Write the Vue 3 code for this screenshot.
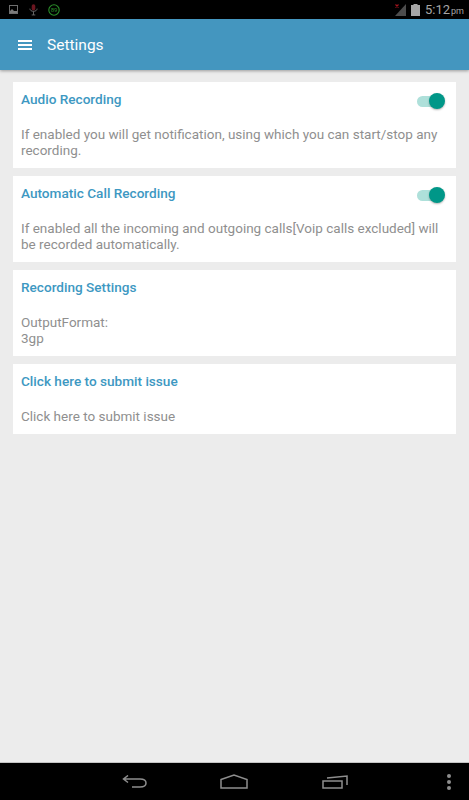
<script setup>
const cards = [
  { title: 'Audio Recording', toggle: true, lines: ['If enabled you will get notification, using which you can start/stop any', 'recording.'] },
  { title: 'Automatic Call Recording', toggle: true, lines: ['If enabled all the incoming and outgoing calls[Voip calls excluded] will', 'be recorded automatically.'] },
  { title: 'Recording Settings', toggle: false, lines: ['OutputFormat:', '3gp'] },
  { title: 'Click here to submit issue', toggle: false, lines: ['Click here to submit issue'] }
]
</script>

<template>
  <div class="screen">
    <div class="status-bar">
      <div class="status-left">
        <svg width="10" height="10" viewBox="0 0 10 10">
          <rect x="0.5" y="0.5" width="8" height="8" fill="none" stroke="#6e6e6e" />
          <path d="M1 8 L1 6 L3 4 L5 6 L8 6 L8 8 Z" fill="#7c7c7c" />
        </svg>
        <svg width="9" height="12" viewBox="0 0 10 13">
          <rect x="3" y="0" width="4" height="7" rx="2" fill="#6b1620" />
          <path d="M1 5 C1 9 9 9 9 5 M5 8 V12 M3 12 H7" fill="none" stroke="#6e6e6e" stroke-width="1" />
        </svg>
        <svg width="12" height="12" viewBox="0 0 12 12">
          <circle cx="6" cy="6" r="5.2" fill="none" stroke="#2a8f2a" stroke-width="1.1" />
          <text x="6" y="8" text-anchor="middle" class="battery-level">89</text>
        </svg>
      </div>
      <div class="status-right">
        <svg width="11" height="12" viewBox="0 0 11 12">
          <path d="M0 12 L11 0 V12 Z" fill="#4c4c4c" />
          <path d="M0.5 0.5 L3.5 3.5 M3.5 0.5 L0.5 3.5" stroke="#a8141e" stroke-width="1.1" />
        </svg>
        <svg class="battery" width="9" height="12" viewBox="0 0 9 12">
          <rect x="2.5" y="0" width="4" height="2" fill="#a6a6a6" />
          <rect x="0" y="1" width="9" height="11" fill="#a6a6a6" />
        </svg>
        <span class="clock">5:12</span>
        <span class="ampm">pm</span>
      </div>
    </div>

    <header class="toolbar">
      <div class="burger"><i></i><i></i><i></i></div>
      <span class="toolbar-title">Settings</span>
    </header>

    <main class="content">
      <section v-for="card in cards" :key="card.title" class="card">
        <div class="card-head">
          <h2>{{ card.title }}</h2>
          <div v-if="card.toggle" class="switch"><span class="thumb"></span></div>
        </div>
        <p><span v-for="line in card.lines" :key="line">{{ line }}</span></p>
      </section>
    </main>

    <nav class="nav-bar">
      <svg class="nav-back" width="25" height="13" viewBox="0 0 25 13">
        <path d="M1.5 4 H18 C26 4 26 12 18 12 H10 M6 0.5 L1.5 4 L6 7.5" fill="none" stroke="#8e8e8e" stroke-width="1.5" />
      </svg>
      <svg class="nav-home" width="28" height="15" viewBox="0 0 28 15">
        <path d="M1 5.5 L14 1 L27 5.5 V14 H1 Z" fill="none" stroke="#8e8e8e" stroke-width="1.5" />
      </svg>
      <svg class="nav-recent" width="26" height="14" viewBox="0 0 26 14">
        <rect x="1" y="6" width="19" height="7" fill="none" stroke="#8e8e8e" stroke-width="1.5" />
        <path d="M5 3 L25 1 V10" fill="none" stroke="#8e8e8e" stroke-width="1.5" />
      </svg>
      <div class="nav-more"><i></i><i></i><i></i></div>
    </nav>
  </div>
</template>

<style scoped>
.screen {
  width: 469px;
  height: 800px;
  display: flex;
  flex-direction: column;
  background: #ececec;
  font-family: Roboto, "Liberation Sans", sans-serif;
  overflow: hidden;
}
.status-bar {
  height: 19px;
  background: #000;
  display: flex;
  align-items: center;
  justify-content: space-between;
  flex-shrink: 0;
}
.status-left {
  display: flex;
  align-items: center;
  gap: 10px;
  padding-left: 9px;
}
.battery-level {
  font-size: 6px;
  fill: #2a8f2a;
}
.status-right {
  display: flex;
  align-items: center;
  padding-right: 5px;
  color: #a6a6a6;
}
.battery {
  margin-left: 5px;
}
.clock {
  font-size: 13px;
  margin-left: 5px;
}
.ampm {
  font-size: 9px;
  margin-left: 1px;
  margin-top: 2px;
}
.toolbar {
  height: 51px;
  background: #4496bf;
  display: flex;
  align-items: center;
  flex-shrink: 0;
  box-shadow: 0 1px 3px rgba(0, 0, 0, 0.35);
}
.burger {
  display: flex;
  flex-direction: column;
  gap: 2px;
  margin-left: 18px;
  width: 14px;
}
.burger i {
  display: block;
  height: 2px;
  background: #fff;
}
.toolbar-title {
  color: #fff;
  font-size: 15.5px;
  margin-left: 15px;
}
.content {
  flex: 1;
  display: flex;
  flex-direction: column;
  gap: 8px;
  padding: 12px 13px 0 13px;
}
.card {
  background: #fff;
  padding: 8px 9px 10px 8px;
}
.card-head {
  display: flex;
  justify-content: space-between;
  align-items: center;
  height: 18px;
  margin-bottom: 18px;
}
h2 {
  margin: 0;
  font-size: 13.6px;
  font-weight: 500;
  color: #3d98c2;
}
p {
  margin: 0;
  font-size: 13.5px;
  line-height: 16px;
  color: #8f8f8f;
}
p span {
  display: block;
  white-space: nowrap;
}
.switch {
  position: relative;
  width: 27px;
  height: 11px;
  border-radius: 6px;
  background: #aee0da;
  margin-right: 3px;
  margin-top: 4px;
}
.thumb {
  position: absolute;
  right: -1px;
  top: -3px;
  width: 16px;
  height: 16px;
  border-radius: 50%;
  background: #009788;
  box-shadow: 0 1px 2px rgba(0, 0, 0, 0.3);
}
.nav-bar {
  height: 37px;
  background: #000;
  border-top: 1px solid #c4c4c4;
  display: flex;
  align-items: center;
  flex-shrink: 0;
}
.nav-back {
  margin-left: 122px;
}
.nav-home {
  margin-left: 73px;
}
.nav-recent {
  margin-left: 74px;
}
.nav-more {
  display: flex;
  flex-direction: column;
  gap: 2px;
  margin-left: 99px;
}
.nav-more i {
  display: block;
  width: 4px;
  height: 4px;
  border-radius: 50%;
  background: #8e8e8e;
}
</style>

<style>
html, body {
  margin: 0;
  background: #ececec;
}
</style>
